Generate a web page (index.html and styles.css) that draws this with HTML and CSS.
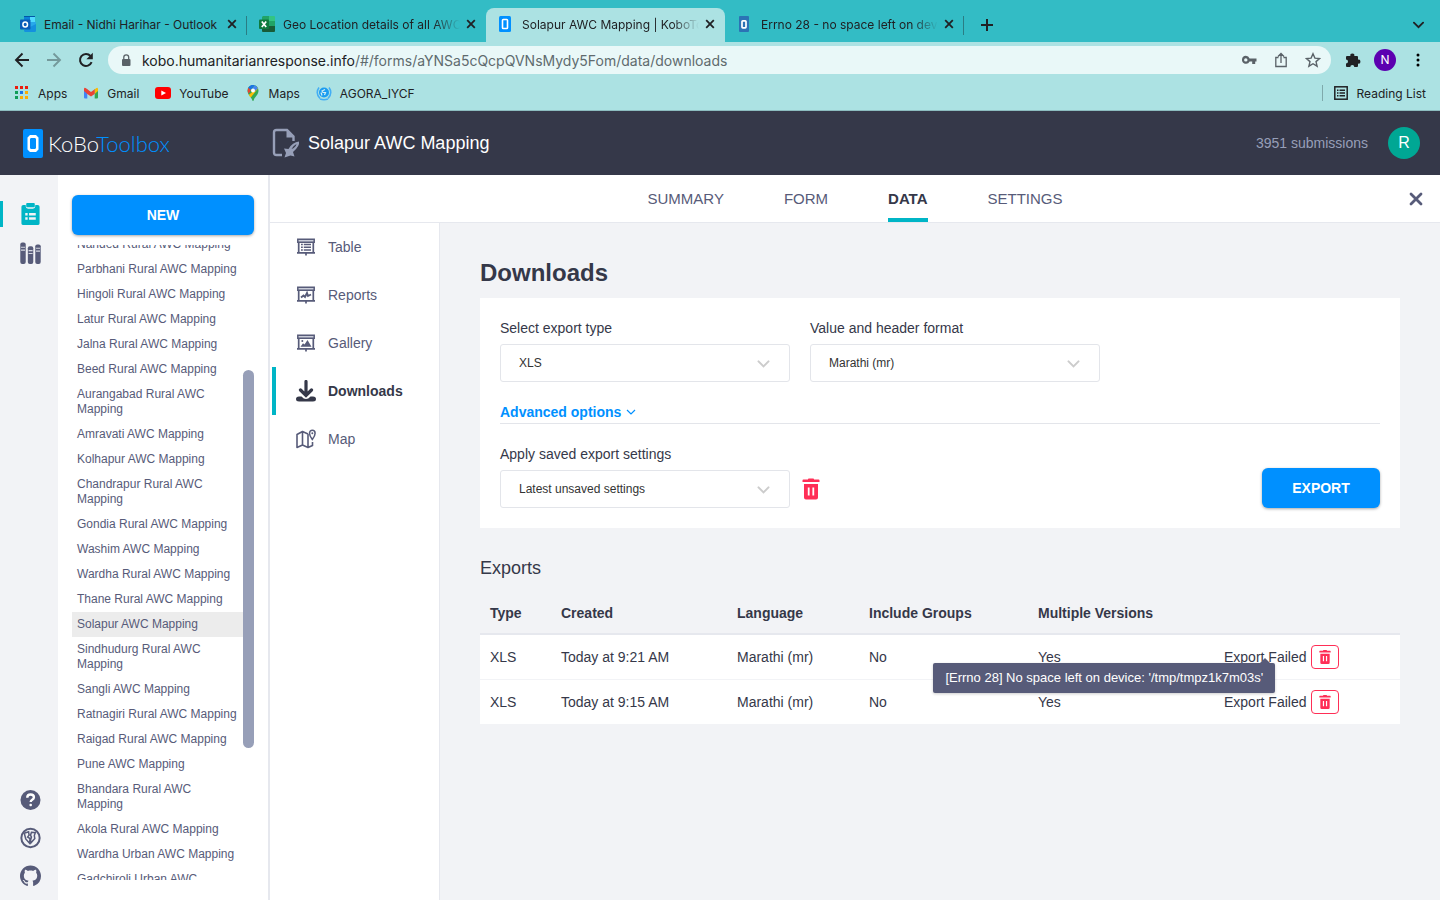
FILE: index.html
```html
<!DOCTYPE html>
<html lang="en">
  <head>
    <meta charset="utf-8">
    <title>Solapur AWC Mapping | KoboToolbox</title>
    <link rel="stylesheet" href="styles.css">
  </head>

  <body>

    <!-- shared icons -->
    <svg class="sprite" width="0" height="0" aria-hidden="true">
      <symbol id="i-close" viewBox="0 0 10 10"><path d="M1.2 1.2l7.6 7.6M8.8 1.2L1.2 8.8" fill="none" stroke="currentColor" stroke-width="1.8"/></symbol>
      <symbol id="i-chevron" viewBox="0 0 12 8"><path d="M1 1.4l5 5 5-5" fill="none" stroke="currentColor" stroke-width="2" stroke-linecap="round"/></symbol>
      <symbol id="i-trash" viewBox="0 0 18 22"><path d="M6 1.6V1.2Q6 .5 6.8.5h4.4q.8 0 .8.7v.4h4.6q.9 0 .9.9v1.6H.5V2.500q0-.9.9-.9zM2 6h14v13.500q0 2-2 2H4q-2 0-2-2zM5.800 9.500v8h1.800v-8zm4.600 0v8h1.800v-8z" fill="currentColor" fill-rule="evenodd"/></symbol>
      <symbol id="i-board" viewBox="0 0 20 20"><path d="M1.800 2.300h16.400v2.900H1.800z" fill="#c9ccd8" stroke="currentColor" stroke-width="1.500"/><path d="M2.700 5v11M17.300 5v11M1 15.800h18M10 16v2.500" fill="none" stroke="currentColor" stroke-width="1.700"/></symbol>
    </svg>

    <div class="browser">
      <div class="tabs">
        <div class="tab">
          <svg class="fav" viewBox="0 0 16 16"><path d="M4 0h11v9H4z" fill="#0358a7"/><path d="M4 1h6v5H4z" fill="#0a84d8"/><path d="M10 1h5v5h-5z" fill="#50d9ff"/><path d="M4 6h6v4H4z" fill="#0364b8"/><path d="M10 6h6l-1 8h-5z" fill="#28a8ea"/><path d="M4 14l12-6v6.500q0 1.500-1.500 1.500H5q-1 0-1-2z" fill="#1490df"/><rect y="3.500" width="10.500" height="10" rx="1" fill="#0a5cb8"/><ellipse cx="5.200" cy="8.500" rx="2.300" ry="2.500" fill="none" stroke="#fff" stroke-width="1.500"/></svg>
          <span class="tab-title">Email - Nidhi Harihar - Outlook</span>
          <button class="tab-close" aria-label="Close tab"><svg><use href="#i-close"/></svg></button>
        </div>
        <div class="tab">
          <svg class="fav" viewBox="0 0 16 16"><path d="M4 0h6v5H3V1z" fill="#21a366"/><path d="M10 0h5q1 0 1 1v4h-6z" fill="#33c481"/><path d="M3 5h7v5H3z" fill="#107c41"/><path d="M10 5h6v5h-6z" fill="#21a366"/><path d="M3 10h13v5q0 1-1 1H4q-1 0-1-1z" fill="#185c37"/><rect y="3.500" width="10" height="9.500" rx="1" fill="#0e7a3e"/><path d="M2.800 5.500l4.400 5.500M7.200 5.500L2.800 11" stroke="#fff" stroke-width="1.700"/></svg>
          <span class="tab-title fade">Geo Location details of all AWC</span>
          <button class="tab-close" aria-label="Close tab"><svg><use href="#i-close"/></svg></button>
        </div>
        <div class="tab current">
          <svg class="fav" viewBox="0 0 16 16"><rect x="1" width="12" height="16" rx="1.500" fill="#0090ff"/><rect x="4.500" y="3.500" width="5" height="9" rx=".8" fill="none" stroke="#fff" stroke-width="1.600"/></svg>
          <span class="tab-title fade">Solapur AWC Mapping | KoboTo</span>
          <button class="tab-close" aria-label="Close tab"><svg><use href="#i-close"/></svg></button>
        </div>
        <div class="tab">
          <svg class="fav" viewBox="0 0 16 16"><rect x="2" width="10" height="16" rx="1" fill="#2b73b5"/><rect x="5" y="4.800" width="4" height="7" rx=".8" fill="none" stroke="#fff" stroke-width="1.700"/></svg>
          <span class="tab-title fade">Errno 28 - no space left on dev</span>
          <button class="tab-close" aria-label="Close tab"><svg><use href="#i-close"/></svg></button>
        </div>
        <button class="tab-add" aria-label="New tab"><svg viewBox="0 0 12 12"><path d="M6 0v12M0 6h12" stroke="currentColor" stroke-width="2"/></svg></button>
        <button class="tab-menu" aria-label="Search tabs"><svg><use href="#i-chevron"/></svg></button>
      </div>

      <div class="toolbar">
        <button class="nav-btn" aria-label="Back"><svg viewBox="0 0 16 16"><path d="M15 8H2M8.500 1.500L2 8l6.500 6.500" fill="none" stroke="currentColor" stroke-width="1.900"/></svg></button>
        <button class="nav-btn off" aria-label="Forward"><svg viewBox="0 0 16 16"><path d="M1 8h13M7.500 1.500L14 8l-6.500 6.500" fill="none" stroke="currentColor" stroke-width="1.900"/></svg></button>
        <button class="nav-btn" aria-label="Reload"><svg viewBox="0 0 16 16"><path d="M13.600 10.200A6 6 0 1 1 12.500 4" fill="none" stroke="currentColor" stroke-width="2"/><path d="M14.800.8v6.400H8.400z" fill="currentColor"/></svg></button>
        <div class="omnibox">
          <svg class="lock" viewBox="0 0 10 13"><rect x="1" y="5" width="8.500" height="7" rx="1" fill="#5a6268"/><path d="M2.800 5V3.300a2.400 2.400 0 0 1 4.900 0V5" fill="none" stroke="#5a6268" stroke-width="1.300"/></svg>
          <span class="url">kobo.humanitarianresponse.info<span>/#/forms/aYNSa5cQcpQVNsMydy5Fom/data/downloads</span></span>
          <svg class="box-icon" viewBox="0 0 16 16"><path fill-rule="evenodd" d="M4.800 3.800a4 4 0 0 1 3.800 2.700H15.500v3h-1.300V12h-3V9.500H8.600A4 4 0 1 1 4.800 3.800zm0 2.400a1.700 1.700 0 1 0 0 3.400 1.700 1.700 0 0 0 0-3.400z" fill="currentColor"/></svg>
          <svg class="box-icon" viewBox="0 0 16 16"><path d="M5.500 5.500H2.800v9h10.400v-9h-2.700M8 11V2M5 4.500L8 1.500l3 3" fill="none" stroke="currentColor" stroke-width="1.300"/></svg>
          <svg class="box-icon" viewBox="0 0 16 16"><path d="M8 1.800l1.900 4.300 4.700.4-3.600 3.100 1.100 4.600L8 11.700l-4.100 2.500L5 9.600 1.400 6.500l4.700-.4z" fill="none" stroke="currentColor" stroke-width="1.400"/></svg>
        </div>
        <svg class="puzzle" viewBox="0 0 16 16"><path d="M2 4h3.400a2 2 0 1 1 3.900 0H12q1 0 1 1v2.700a2 2 0 1 1 0 3.900V14q0 1-1 1H9.300a2 2 0 0 0-4 0H2q-1 0-1-1v-2.600a2 2 0 0 0 0-4V5q0-1 1-1z" fill="#202124"/></svg>
        <span class="profile">N</span>
        <svg class="dots" viewBox="0 0 4 14"><circle cx="2" cy="2" r="1.500"/><circle cx="2" cy="7" r="1.500"/><circle cx="2" cy="12" r="1.500"/></svg>
      </div>

      <div class="bookmarks">
        <a href="#"><svg viewBox="0 0 16 16"><path d="M1 1h3v3H1zM6 1h3v3H6zM11 1h3v3h-3z" fill="#ea1c0d"/><path d="M1 6h3v3H1zM1 11h3v3H1z" fill="#0f9d58"/><path d="M6 6h3v3H6z" fill="#1a73e8"/><path d="M11 6h3v3h-3zM6 11h3v3H6zM11 11h3v3h-3z" fill="#fbab05"/></svg>Apps</a>
        <a href="#"><svg viewBox="0 0 16 16"><path d="M1 4h3.300v9.500H2q-1 0-1-1z" fill="#4285f4"/><path d="M11.700 4H15v8.500q0 1-1 1h-2.300z" fill="#34a853"/><path d="M11.700 4.500L13 3.200q2-1 2 1V6l-3.300 3z" fill="#fbbc04"/><path d="M1 6V4.200q0-2 2-1L8 7l3.700-2.700V9L8 11.500 4.300 9z" fill="#ea4335"/></svg>Gmail</a>
        <a href="#"><svg viewBox="0 0 16 16"><rect y="2" width="16" height="12" rx="3" fill="#f00"/><path d="M6.300 5.500L11 8l-4.700 2.500z" fill="#fff"/></svg>YouTube</a>
        <a href="#"><svg viewBox="0 0 16 16"><path d="M8 16q-.6 0-.8-1C6.500 12 2.500 10 2.500 5.500A5.500 5.500 0 0 1 13.500 5.500C13.500 10 9.500 12 8.800 15q-.2 1-.8 1z" fill="#34a853"/><path d="M3.200 2.800A5.500 5.500 0 0 1 9.500.2L5 5.500z" fill="#1a73e8"/><path d="M3.200 2.800L6 5 3.500 8.800Q2 6 3.200 2.800z" fill="#ea4335"/><path d="M6 8l-2.200 2q1 1.500 2 2.500L13 3.500 12 2z" fill="#fbbc04"/><path d="M9.500.2q2.500.8 3.500 3L9 7 7 4z" fill="#4285f4"/><circle cx="8" cy="5.500" r="2" fill="#fff"/></svg>Maps</a>
        <a href="#"><svg viewBox="0 0 16 16"><circle cx="8" cy="7.500" r="5" fill="#1c9cf0"/><path d="M9 4.500L6 6l1 1.500h2.500L8.500 10M5 7.500l1 3" fill="none" stroke="#d5f0f5" stroke-width="1.200"/><path d="M3 2.500Q-1 8 4 13.500M13 2.500q4 5.500-1 11M4 14q4 1.500 8 0" fill="none" stroke="#43aef5" stroke-width="1.500"/></svg>AGORA_IYCF</a>
        <a href="#" class="reading"><svg viewBox="0 0 16 16"><rect x="1.800" y="1.800" width="12.400" height="12.400" fill="none" stroke="#202124" stroke-width="1.500"/><path d="M4 5.200h1.500M4 8h1.500M4 10.800h1.500M6.500 5.200H12M6.500 8H12M6.500 10.800H12" stroke="#202124" stroke-width="1.400"/></svg>Reading List</a>
      </div>
    </div>

    <header class="kobo-header">
      <a class="logo" href="#">
        <svg viewBox="0 0 20 29"><rect width="20" height="29" rx="2" fill="#0090ff"/><path fill-rule="evenodd" d="M7 6h6l2.500 2.500v12L13 23H7l-2.500-2.500v-12zm.8 3L7 10v9l.8 1h4.400l.8-1v-9l-.8-1z" fill="#fff"/></svg>
        <span class="logo-text">KoBo<span>Toolbox</span></span>
      </a>
      <div class="project">
        <svg viewBox="0 0 28 30"><path d="M10 27H4.500Q2 27 2 24.500V4.500Q2 2 4.500 2H15l6.500 6.500V13" fill="none" stroke="#979fb8" stroke-width="2.400"/><path d="M14.500 2v7.500h7.500z" fill="#979fb8"/><path d="M12 20.500l4.500.5q4-7 10.500-7.500 1 4.500-6 10.500l1.500 4.500-4-1-6 2 1.500-4.500z" fill="#979fb8"/><path d="M19.500 21q2-3.500 5-5-1 3.500-5 5z" fill="#353849"/></svg>
        <h1>Solapur AWC Mapping</h1>
      </div>
      <span class="submissions">3951 submissions</span>
      <button class="account">R</button>
    </header>

    <div class="kobo-body">
      <nav class="rail">
        <a href="#" class="rail-link active" aria-label="Projects"><svg viewBox="0 0 22 24"><path fill-rule="evenodd" d="M3.500 2.500H6V4q0 2.500 2.500 2.500h5Q16 6.500 16 4V2.500h2.500q2 0 2 2V22q0 1.500-1.500 1.500H3Q1.500 23.500 1.500 22V4.500q0-2 2-2zM5.500 11v2.500H8V11zm4 0v2.500h7V11zm-4 4.500V18H8v-2.500zm4 0V18h7v-2.500z" fill="currentColor"/><rect x="6.500" y=".5" width="9" height="4.500" rx="1" fill="currentColor"/></svg></a>
        <a href="#" class="rail-link" aria-label="Library"><svg viewBox="0 0 22 24"><rect x=".3" y="1" width="5.700" height="22.500" rx="2" fill="currentColor"/><rect x="8.200" y="5" width="5.700" height="18.500" rx="2" fill="currentColor"/><rect x="16" y="3" width="5.700" height="20.500" rx="2" fill="currentColor"/><path d="M1 6h4.300M1 9h4.300M9 9.500h4.200M9 12.500h4.200M16.800 7h4.200M16.800 10h4.200" stroke="#d5d7e0" stroke-width="1.200"/></svg></a>
        <div class="rail-foot">
          <a href="#" aria-label="Help"><svg viewBox="0 0 22 22"><circle cx="11" cy="11" r="10.500" fill="currentColor"/><path d="M7.600 8.600q0-3.400 3.500-3.400t3.500 3q0 1.500-1.800 2.600-1.600 1-1.600 2.400" fill="none" stroke="#fff" stroke-width="2.500"/><rect x="9.900" y="15" width="2.600" height="2.600" rx="1" fill="#fff"/></svg></a>
          <a href="#" aria-label="Website"><svg viewBox="0 0 22 22"><circle cx="11" cy="11" r="9.600" fill="none" stroke="currentColor" stroke-width="2.100"/><path d="M4.500 6l4.500-1.500.5 3.500-1.500 2 2.500 1.500-.5 5-4-4.500zM12 5l4 .5-1 3 .5 3-4 4.500-.5-2.500 1-3.500-1-2z" fill="none" stroke="currentColor" stroke-width="1.600"/></svg></a>
          <a href="#" aria-label="GitHub"><svg viewBox="0 0 16 16"><path fill="currentColor" d="M8 0C3.580 0 0 3.580 0 8c0 3.540 2.290 6.530 5.470 7.590.4.070.55-.17.55-.38 0-.19-.01-.82-.01-1.490-2.010.37-2.530-.49-2.690-.94-.09-.23-.48-.94-.82-1.130-.28-.15-.68-.52-.01-.53.63-.01 1.080.58 1.230.82.72 1.210 1.870.87 2.330.66.070-.52.28-.87.51-1.070-1.780-.2-3.640-.89-3.640-3.950 0-.87.31-1.590.82-2.150-.08-.2-.36-1.020.08-2.120 0 0 .67-.21 2.200.82.64-.18 1.320-.27 2-.27s1.360.09 2 .27c1.530-1.040 2.200-.82 2.200-.82.44 1.100.16 1.920.08 2.120.51.56.82 1.270.82 2.150 0 3.070-1.870 3.750-3.650 3.950.29.25.54.73.54 1.480 0 1.070-.01 1.930-.01 2.200 0 .21.15.46.55.38A8.010 8.010 0 0 0 16 8c0-4.420-3.580-8-8-8z"/></svg></a>
        </div>
      </nav>

      <aside class="drawer">
        <button class="btn new">NEW</button>
        <div class="list-wrap">
          <ul class="projects">
            <li><a href="#">Nanded Rural AWC Mapping</a></li>
            <li><a href="#">Parbhani Rural AWC Mapping</a></li>
            <li><a href="#">Hingoli Rural AWC Mapping</a></li>
            <li><a href="#">Latur Rural AWC Mapping</a></li>
            <li><a href="#">Jalna Rural AWC Mapping</a></li>
            <li><a href="#">Beed Rural AWC Mapping</a></li>
            <li><a href="#">Aurangabad Rural AWC Mapping</a></li>
            <li><a href="#">Amravati AWC Mapping</a></li>
            <li><a href="#">Kolhapur AWC Mapping</a></li>
            <li><a href="#">Chandrapur Rural AWC Mapping</a></li>
            <li><a href="#">Gondia Rural AWC Mapping</a></li>
            <li><a href="#">Washim AWC Mapping</a></li>
            <li><a href="#">Wardha Rural AWC Mapping</a></li>
            <li><a href="#">Thane Rural AWC Mapping</a></li>
            <li><a href="#" class="selected">Solapur AWC Mapping</a></li>
            <li><a href="#">Sindhudurg Rural AWC Mapping</a></li>
            <li><a href="#">Sangli AWC Mapping</a></li>
            <li><a href="#">Ratnagiri Rural AWC Mapping</a></li>
            <li><a href="#">Raigad Rural AWC Mapping</a></li>
            <li><a href="#">Pune AWC Mapping</a></li>
            <li><a href="#">Bhandara Rural AWC Mapping</a></li>
            <li><a href="#">Akola Rural AWC Mapping</a></li>
            <li><a href="#">Wardha Urban AWC Mapping</a></li>
            <li><a href="#">Gadchiroli Urban AWC Mapping</a></li>
          </ul>
          <div class="scroll"><div class="thumb"></div></div>
        </div>
      </aside>

      <div class="content">
        <nav class="form-tabs">
          <a href="#">SUMMARY</a>
          <a href="#">FORM</a>
          <a href="#" class="active">DATA</a>
          <a href="#">SETTINGS</a>
          <button class="form-close" aria-label="Close project"><svg viewBox="0 0 14 14"><path d="M2 2l10 10M12 2L2 12" stroke="currentColor" stroke-width="2.800" stroke-linecap="round"/></svg></button>
        </nav>

        <div class="data-view">
          <nav class="side-tabs">
            <a href="#"><svg viewBox="0 0 20 20"><use href="#i-board"/><path d="M5 7.500h1.800M5 10.200h1.800M5 12.900h1.800M7.800 7.500H15M7.800 10.200H15M7.800 12.900H15" stroke="currentColor" stroke-width="1.500"/></svg>Table</a>
            <a href="#"><svg viewBox="0 0 20 20"><use href="#i-board"/><path d="M5 12.500l2.500-2 1.500 1.500 2-4 1 3 3-1.500" fill="none" stroke="currentColor" stroke-width="1.900"/></svg>Reports</a>
            <a href="#"><svg viewBox="0 0 20 20"><use href="#i-board"/><path d="M4.500 13.800l2.500-3.500 1.500 1.200 3-4.500 4 6.800z" fill="currentColor"/><circle cx="6.300" cy="8" r="1" fill="currentColor"/></svg>Gallery</a>
            <a href="#" class="active"><svg viewBox="0 0 20 22"><path d="M10 1.500v12M4.500 10l5.500 5.500L15.500 10" fill="none" stroke="currentColor" stroke-width="3.200" stroke-linecap="round"/><path d="M3 16.500h2.500q4.500 5 9 0H17q3 0 3 2.500t-3 2.500H3q-3 0-3-2.500t3-2.500z" fill="currentColor"/></svg>Downloads</a>
            <a href="#"><svg viewBox="0 0 20 20"><path d="M12 5L6.500 2.500 1 5.500v13l5.500-2.500 5.500 2.500 4.500-2V13M6.500 2.500V16M12 5v13.500" fill="none" stroke="currentColor" stroke-width="1.600" stroke-linejoin="round"/><path d="M16.300 10.500Q13.500 7 13.500 4.200a2.800 3 0 0 1 5.600 0Q19.100 7 16.300 10.500z" fill="#fff" stroke="currentColor" stroke-width="1.500"/><circle cx="16.300" cy="4.300" r="1" fill="currentColor"/></svg>Map</a>
          </nav>

          <main class="downloads">
            <h2>Downloads</h2>
            <form class="card">
              <div class="row">
                <div class="field">
                  <label for="type">Select export type</label>
                  <div class="select"><select id="type"><option>XLS</option></select><svg><use href="#i-chevron"/></svg></div>
                </div>
                <div class="field">
                  <label for="format">Value and header format</label>
                  <div class="select"><select id="format"><option>Marathi (mr)</option></select><svg><use href="#i-chevron"/></svg></div>
                </div>
              </div>
              <div class="advanced">
                <button type="button">Advanced options <svg viewBox="0 0 10 6"><path d="M1 1l4 4 4-4" fill="none" stroke="currentColor" stroke-width="1.200"/></svg></button>
              </div>
              <div class="row bottom">
                <div class="field">
                  <label for="saved">Apply saved export settings</label>
                  <div class="select"><select id="saved"><option>Latest unsaved settings</option></select><svg><use href="#i-chevron"/></svg></div>
                </div>
                <button type="button" class="trash" aria-label="Delete settings"><svg><use href="#i-trash"/></svg></button>
                <button type="button" class="btn export">EXPORT</button>
              </div>
            </form>

            <h3>Exports</h3>
            <table>
              <thead>
                <tr><th class="c-type">Type</th><th class="c-created">Created</th><th class="c-lang">Language</th><th class="c-groups">Include Groups</th><th class="c-versions">Multiple Versions</th><th></th></tr>
              </thead>
              <tbody>
                <tr>
                  <td>XLS</td><td>Today at 9:21 AM</td><td>Marathi (mr)</td><td>No</td><td>Yes</td>
                  <td><div class="actions"><span class="failed">Export Failed<span class="tip" role="tooltip">[Errno 28] No space left on device: '/tmp/tmpz1k7m03s'</span></span><button class="del" aria-label="Delete export"><svg><use href="#i-trash"/></svg></button></div></td>
                </tr>
                <tr>
                  <td>XLS</td><td>Today at 9:15 AM</td><td>Marathi (mr)</td><td>No</td><td>Yes</td>
                  <td><div class="actions"><span class="failed">Export Failed</span><button class="del" aria-label="Delete export"><svg><use href="#i-trash"/></svg></button></div></td>
                </tr>
              </tbody>
            </table>
          </main>
        </div>
      </div>
    </div>

  </body>
</html>
```
FILE: styles.css
```css
* {
  box-sizing: border-box;
}

body {
  margin: 0;
  height: 100vh;
  display: flex;
  flex-direction: column;
  overflow: hidden;
  font-family: "Liberation Sans", Arial, sans-serif;
  font-size: 14px;
  color: #353849;
  background: #f2f3f6;
}

a {
  color: inherit;
  text-decoration: none;
}

button {
  border: 0;
  padding: 0;
  background: none;
  color: inherit;
  font: inherit;
  cursor: pointer;
}

svg {
  display: block;
  flex: none;
}

.sprite {
  position: absolute;
}

/* browser window */
.browser {
  flex: none;
  background: #ace2e3;
  border-bottom: 1px solid #8cbcbf;
  font-family: Inter, Roboto, sans-serif;
  font-size: 12px;
  color: #202124;
}

.tabs {
  display: flex;
  height: 42px;
  padding: 8px 16px 0 8px;
  background: #33bcc5;
}

.tab {
  position: relative;
  display: flex;
  align-items: center;
  flex: 0 1 239px;
  min-width: 0;
  padding: 0 10px 2px 12px;
}

.tab::after {
  content: "";
  position: absolute;
  right: 0;
  top: 8px;
  width: 1px;
  height: 19px;
  background: #2a7d84;
}

.tab.current {
  background: #ace2e3;
  border-radius: 8px 8px 0 0;
}

.tab.current::after,
.tab:has(+ .current)::after {
  display: none;
}

.fav {
  width: 16px;
  height: 16px;
  margin-right: 8px;
}

.tab-title {
  flex: 1;
  overflow: hidden;
  white-space: nowrap;
}

.fade {
  -webkit-mask-image: linear-gradient(to right, #000 85%, transparent);
  mask-image: linear-gradient(to right, #000 85%, transparent);
}

.tab-close {
  margin-left: 6px;
}

.tab-close svg {
  width: 10px;
  height: 10px;
}

.tab-add {
  margin-left: 17px;
}

.tab-add svg {
  width: 12px;
  height: 12px;
}

.tab-menu {
  margin-left: auto;
}

.tab-menu svg {
  width: 11px;
  height: 8px;
}

.toolbar {
  display: flex;
  align-items: center;
  height: 36px;
  padding: 0 20px 0 14px;
}

.nav-btn {
  width: 16px;
  margin-right: 16px;
}

.nav-btn svg {
  width: 16px;
  height: 16px;
}

.off {
  color: #74999b;
}

.omnibox {
  display: flex;
  align-items: center;
  flex: 1;
  min-width: 0;
  height: 28px;
  margin: 0 14px 0 -2px;
  padding: 0 10px 0 13px;
  border-radius: 14px;
  background: #e9f8f8;
  color: #5a6268;
}

.lock {
  width: 10px;
  height: 13px;
  margin-right: 11px;
}

.url {
  flex: 1;
  white-space: nowrap;
  font-size: 14px;
  color: #202124;
}

.url span {
  color: #5f6b6e;
}

.box-icon {
  width: 16px;
  height: 16px;
  margin-left: 16px;
}

.puzzle {
  width: 16px;
  height: 16px;
}

.profile {
  width: 22px;
  margin: 0 20px 0 13px;
  line-height: 22px;
  border-radius: 50%;
  text-align: center;
  color: #fff;
  background: #5c00b0;
}

.dots {
  width: 4px;
  height: 14px;
}

.bookmarks {
  display: flex;
  align-items: center;
  gap: 16px;
  height: 32px;
  padding: 0 14px 2px;
}

.bookmarks a {
  display: flex;
  align-items: center;
  gap: 8px;
}

.bookmarks svg {
  width: 16px;
  height: 16px;
}

.bookmarks .reading {
  margin-left: auto;
  padding-left: 10px;
  border-left: 1px solid #7fa9ab;
}

/* kobo top bar */
.kobo-header {
  display: flex;
  align-items: center;
  flex: none;
  height: 64px;
  padding: 0 20px 0 23px;
  background: #353849;
  color: #fff;
}

.logo {
  display: flex;
  align-items: center;
  width: 249px;
}

.logo svg {
  width: 20px;
  height: 29px;
  margin-right: 5px;
}

.logo-text {
  font-family: Lato, sans-serif;
  font-size: 22px;
  font-weight: 300;
}

.logo-text span {
  color: #0090ff;
}

.project {
  display: flex;
  align-items: center;
  gap: 8px;
}

.project svg {
  width: 28px;
  height: 30px;
}

.project h1 {
  margin: 0;
  font-size: 18px;
  font-weight: 400;
}

.submissions {
  margin-left: auto;
  color: #979fb8;
}

.account {
  width: 32px;
  height: 32px;
  margin-left: 20px;
  border-radius: 50%;
  background: #00a794;
  font-size: 16px;
}

.kobo-body {
  display: flex;
  flex: 1;
  min-height: 0;
}

.rail {
  display: flex;
  flex-direction: column;
  flex: none;
  width: 58px;
  padding: 26px 0 13px;
  color: #575b79;
}

.rail-link {
  margin-bottom: 13px;
  padding-left: 20px;
}

.rail-link.active {
  padding-left: 17px;
  border-left: 3px solid #00b5c6;
  color: #00b5c6;
}

.rail-link svg {
  width: 21px;
  height: 26px;
}

.rail-foot {
  display: flex;
  flex-direction: column;
  gap: 16px;
  margin-top: auto;
  padding-left: 20px;
}

.rail-foot svg {
  width: 21px;
  height: 22px;
}

.drawer {
  display: flex;
  flex-direction: column;
  flex: none;
  width: 212px;
  padding: 20px 14px;
  background: #fff;
  border-right: 2px solid #e6e8ee;
}

.btn {
  height: 40px;
  border-radius: 6px;
  background: #0090ff;
  box-shadow: 0 1px 3px rgba(0, 0, 0, 0.35);
  color: #fff;
  font-weight: bold;
}

.new {
  flex: none;
}

.list-wrap {
  display: flex;
  flex: 1;
  min-height: 0;
  margin-top: 10px;
  overflow: hidden;
}

.projects {
  flex: 1;
  margin: -13px 0 0;
  padding: 0;
  list-style: none;
  font-size: 12px;
  line-height: 15px;
  color: #575b79;
}

.projects a {
  display: block;
  padding: 5px;
}

.projects .selected {
  background: #ececec;
}

.scroll {
  width: 11px;
  padding-top: 125px;
}

.thumb {
  height: 378px;
  border-radius: 6px;
  background: #979fb8;
}

/* project area */
.content {
  display: flex;
  flex-direction: column;
  flex: 1;
  min-width: 0;
}

.form-tabs {
  position: relative;
  display: flex;
  justify-content: center;
  gap: 60px;
  flex: none;
  height: 48px;
  background: #fff;
  border-bottom: 1px solid #e6e8ee;
  font-size: 15px;
  line-height: 47px;
  color: #575b79;
}

.form-tabs .active {
  border-bottom: 4px solid #00b5c6;
  font-weight: bold;
  color: #353849;
}

.form-close {
  position: absolute;
  right: 17px;
  top: 17px;
}

.form-close svg {
  width: 14px;
  height: 14px;
}

.data-view {
  display: flex;
  flex: 1;
  min-height: 0;
}

.side-tabs {
  flex: none;
  width: 170px;
  padding-left: 2px;
  background: #fff;
  border-right: 1px solid #e6e8ee;
  color: #575b79;
}

.side-tabs a {
  display: flex;
  align-items: center;
  gap: 12px;
  height: 48px;
  padding-left: 20px;
  border-left: 4px solid transparent;
}

.side-tabs .active {
  border-color: #00b5c6;
  font-weight: bold;
  color: #353849;
}

.side-tabs svg {
  width: 20px;
  height: 22px;
}

.downloads {
  flex: 1;
  min-width: 0;
  padding: 35px 40px;
}

h2 {
  margin: 0 0 10px;
  font-size: 24px;
  line-height: 30px;
}

.card {
  padding: 20px;
  background: #fff;
}

.row {
  display: flex;
  align-items: flex-end;
  gap: 20px;
}

.field {
  width: 290px;
}

.field label {
  display: block;
  margin-bottom: 6px;
  line-height: 20px;
}

.select {
  position: relative;
}

.select select {
  display: block;
  width: 100%;
  height: 38px;
  padding: 0 18px;
  border: 1px solid #e3e5ea;
  border-radius: 3px;
  appearance: none;
  background: #fff;
  color: #333;
  font: inherit;
  font-size: 12px;
}

.select svg {
  position: absolute;
  right: 20px;
  top: 16px;
  width: 13px;
  height: 8px;
  color: #ccc;
  pointer-events: none;
}

.advanced {
  margin: 20px 0;
  border-bottom: 1px solid #e3e5ea;
}

.advanced button {
  display: flex;
  align-items: center;
  gap: 5px;
  height: 21px;
  padding-bottom: 2px;
  color: #0090ff;
  font-weight: bold;
}

.advanced svg {
  width: 10px;
  height: 6px;
}

.bottom {
  gap: 12px;
}

.trash {
  padding-bottom: 8px;
  color: #ff2e56;
}

.trash svg {
  width: 18px;
  height: 22px;
}

.export {
  width: 118px;
  margin-left: auto;
}

h3 {
  margin: 30px 0 14px;
  font-size: 18px;
  font-weight: 400;
  line-height: 20px;
}

table {
  width: 100%;
  border-collapse: collapse;
  table-layout: fixed;
}

th {
  height: 42px;
  padding: 0 10px;
  border-bottom: 2px solid #e6e8ee;
  text-align: left;
}

.c-type { width: 71px; }
.c-created { width: 176px; }
.c-lang { width: 132px; }
.c-groups { width: 169px; }
.c-versions { width: 186px; }

td {
  height: 45px;
  padding: 0 10px;
  border-bottom: 1px solid #f2f3f6;
  background: #fff;
}

.actions {
  display: flex;
  align-items: center;
  gap: 5px;
}

.failed {
  position: relative;
  white-space: nowrap;
}

.del {
  padding: 3px 7px;
  border: 1px solid #ff2e56;
  border-radius: 4px;
  color: #ff2e56;
}

.del svg {
  width: 12px;
  height: 16px;
}

.tip {
  position: absolute;
  z-index: 1;
  top: 14px;
  right: calc(50% - 10px);
  padding: 0 12px;
  border-radius: 2px;
  background: #575b79;
  box-shadow: 0 1px 3px rgba(0, 0, 0, 0.2);
  color: #fff;
  font-size: 13px;
  line-height: 30px;
}

.tip::before {
  content: "";
  position: absolute;
  right: 5px;
  top: -5px;
  border: 5px solid transparent;
  border-top: 0;
  border-bottom-color: #575b79;
}
```
